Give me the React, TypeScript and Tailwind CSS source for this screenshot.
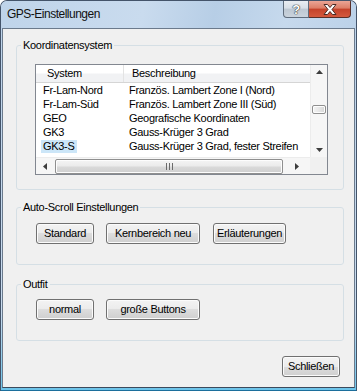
const ROWS: [string, string][] = [
  ['Fr-Lam-Nord', 'Französ. Lambert Zone I (Nord)'],
  ['Fr-Lam-Süd', 'Französ. Lambert Zone III (Süd)'],
  ['GEO', 'Geografische Koordinaten'],
  ['GK3', 'Gauss-Krüger 3 Grad'],
  ['GK3-S', 'Gauss-Krüger 3 Grad, fester Streifen'],
];

const BUTTON =
  'h-[21px] rounded-[3px] border border-[#707070] shadow-[inset_0_0_0_1px_#fbfbfb] bg-[linear-gradient(#f3f3f3_0%,#ebebeb_50%,#dddddd_50%,#cfcfcf_100%)] text-center leading-[19px] text-black';

const THUMB =
  'rounded-[2px] border border-[#8f8f8f] shadow-[inset_0_0_0_1px_#fdfdfd]';

function Arrow({ dir }: { dir: 'up' | 'down' | 'left' | 'right' }) {
  const points = {
    up: '0,4 3.5,0 7,4',
    down: '0,0 3.5,4 7,0',
    left: '4,0 0,3.5 4,7',
    right: '0,0 4,3.5 0,7',
  }[dir];
  const vertical = dir === 'up' || dir === 'down';
  return (
    <svg width={vertical ? 7 : 4} height={vertical ? 4 : 7} viewBox={vertical ? '0 0 7 4' : '0 0 4 7'}>
      <polygon points={points} fill="#3d3d3d" />
    </svg>
  );
}

function Grip() {
  return (
    <svg width="7" height="7" viewBox="0 0 7 7">
      <rect x="0" y="0" width="1" height="7" fill="#6b6b6b" />
      <rect x="3" y="0" width="1" height="7" fill="#6b6b6b" />
      <rect x="6" y="0" width="1" height="7" fill="#6b6b6b" />
    </svg>
  );
}

function ListView() {
  return (
    <div className="w-[293px] h-[111px] border border-[#828790] bg-white flex flex-col">
      <div className="flex flex-1 min-h-0">
        <div className="flex-1 min-w-0 overflow-hidden">
          <div className="flex h-[18px] border-b border-[#d5d5d5] bg-[linear-gradient(#ffffff_0%,#ffffff_45%,#f1f2f4_55%,#f1f2f4_100%)] leading-[17px]">
            <div className="w-[88px] pl-[11px] border-r border-[#e3e3e3]">System</div>
            <div className="flex-1 pl-[8px]">Beschreibung</div>
          </div>
          {ROWS.map(([code, text], index) => (
            <div key={code} className="flex h-[14px] leading-[14px] whitespace-nowrap">
              <div className="w-[88px] pl-[5px]">
                <span
                  className={
                    index === ROWS.length - 1
                      ? 'inline-block h-[13px] leading-[13px] px-[2px] bg-[#cce6f8]'
                      : 'inline-block px-[2px]'
                  }
                >
                  {code}
                </span>
              </div>
              <div className="flex-1 pl-[5px]">{text}</div>
            </div>
          ))}
        </div>
        <div className="w-[17px] bg-[#f6f6f6] border-l border-[#ececec] flex flex-col items-center">
          <div className="h-[17px] flex items-start pt-[5px] justify-center">
            <Arrow dir="up" />
          </div>
          <div className="flex-1 w-full px-[1px]">
            <div
              className={`mt-[23px] h-[9px] ${THUMB} bg-[linear-gradient(90deg,#f4f4f4_0%,#e7e7e7_50%,#d6d6d6_100%)]`}
            />
          </div>
          <div className="h-[17px] flex items-end pb-[5px] justify-center">
            <Arrow dir="down" />
          </div>
        </div>
      </div>
      <div className="flex h-[17px]">
        <div className="flex-1 flex items-center bg-[#f6f6f6] border-t border-[#ececec]">
          <div className="w-[17px] flex justify-center">
            <Arrow dir="left" />
          </div>
          <div
            className={`ml-[2px] w-[228px] h-[15px] flex items-center justify-center ${THUMB} bg-[linear-gradient(#f5f5f5_0%,#ebebeb_45%,#d9d9d9_55%,#cfcfcf_100%)]`}
          >
            <Grip />
          </div>
          <div className="flex-1 flex justify-center">
            <Arrow dir="right" />
          </div>
        </div>
        <div className="w-[17px] bg-[#f0f0f0]" />
      </div>
    </div>
  );
}

function Group({ label, className, children }: { label: string; className: string; children: React.ReactNode }) {
  return (
    <fieldset className={`ml-[13px] w-[328px] rounded-[3px] border border-[#d5dfe5] ${className}`}>
      <legend className="ml-[4px] px-[2px] leading-[13px]">{label}</legend>
      {children}
    </fieldset>
  );
}

export default function App() {
  return (
    <div className="w-[359px] h-[392px] bg-white font-['Liberation_Sans',Arial,sans-serif] text-[11px] tracking-[-0.3px] text-black">
      <div className="w-[357px] h-[391px] rounded-t-[7px] border border-[#44546a] border-b-[#1c6f9c] bg-[linear-gradient(#c3d7ec_0%,#bdd3ea_8%,#c9dbee_80%,#6cc4ea_100%)] flex flex-col overflow-hidden">
        <div className="h-[27px] flex shrink-0 bg-[linear-gradient(100deg,#bfd4ea_0%,#c9dbee_40%,#b7cee6_60%,#c6d9ed_80%,#bcd2e9_100%)]">
          <div className="pl-[6px] pt-[5px] text-[12px] tracking-[-0.5px] text-[#111] leading-[16px]">
            GPS-Einstellungen
          </div>
          <div className="ml-auto mr-[5px] flex h-[17px]">
            <div className="w-[26px] h-[17px] rounded-bl-[4px] border border-t-0 border-[#5f6c7c] bg-[linear-gradient(#e9edf2_0%,#d8dfe7_45%,#bdc7d2_50%,#cad3dd_100%)] flex items-center justify-center text-[13px] font-bold text-white leading-none [text-shadow:0_0_1px_#333,0_0_1px_#333,0_0_1px_#333]">
              ?
            </div>
            <div className="w-[42px] h-[17px] rounded-br-[4px] border border-l-0 border-t-0 border-[#5a2f28] bg-[linear-gradient(#eaa595_0%,#dc7d66_45%,#c4422a_50%,#d4593d_100%)] flex items-center justify-center">
              <svg width="14" height="11" viewBox="0 0 14 11">
                <polygon
                  points="1,0.5 4.5,0.5 7,3.5 9.5,0.5 13,0.5 9,5.5 13,10.5 9.5,10.5 7,7.5 4.5,10.5 1,10.5 5,5.5"
                  fill="#ffffff"
                  stroke="#4a2a24"
                  strokeWidth="1"
                  strokeLinejoin="round"
                />
              </svg>
            </div>
          </div>
        </div>
        <div className="flex-1 mx-[1px] mb-[2px] border border-[#6b7a8c] border-b-[#3b4a5c] bg-[#f0f0f0] flex flex-col">
          <Group label="Koordinatensystem" className="mt-[10px]">
            <div className="pt-[12px] pb-[14px] pl-[18px]">
              <ListView />
            </div>
          </Group>

          <Group label="Auto-Scroll Einstellungen" className="mt-[11px]">
            <div className="pt-[9px] pb-[20px] pl-[19px] flex">
              <button type="button" className={`${BUTTON} w-[58px]`}>
                Standard
              </button>
              <button type="button" className={`${BUTTON} w-[94px] ml-[12px]`}>
                Kernbereich neu
              </button>
              <button type="button" className={`${BUTTON} w-[73px] ml-[13px]`}>
                Erläuterungen
              </button>
            </div>
          </Group>

          <Group label="Outfit" className="mt-[13px]">
            <div className="pt-[8px] pb-[20px] pl-[19px] flex">
              <button type="button" className={`${BUTTON} w-[58px]`}>
                normal
              </button>
              <button type="button" className={`${BUTTON} w-[94px] ml-[12px]`}>
                große Buttons
              </button>
            </div>
          </Group>

          <div className="mt-[15px] flex justify-end pr-[14px]">
            <button type="button" className={`${BUTTON} w-[58px]`}>
              Schließen
            </button>
          </div>
        </div>
      </div>
    </div>
  );
}
